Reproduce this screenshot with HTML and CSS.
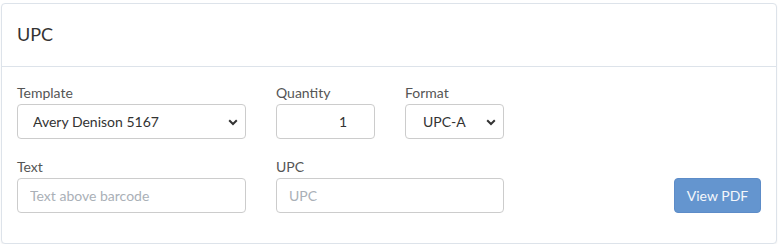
FILE: index.html
```html
<!DOCTYPE html>
<html lang="en">
<head>
<meta charset="utf-8">
<title>UPC</title>
<link rel="stylesheet" href="styles.css">
</head>
<body>
<div class="card">
  <div class="card-header">UPC</div>
  <div class="card-body">
    <div class="row">
      <div class="field w-wide">
        <label class="label" for="tpl">Template</label>
        <div class="select-wrap">
          <select id="tpl" class="control select">
            <option>Avery Denison 5167</option>
          </select>
          <svg class="chev" width="10" height="7" viewBox="0 0 10 7"><path d="M1.2 1.3 L5 5 L8.8 1.3" fill="none" stroke="#333" stroke-width="2"/></svg>
        </div>
      </div>
      <div class="field w-narrow">
        <label class="label" for="qty">Quantity</label>
        <input id="qty" class="control qty" type="text" value="1">
      </div>
      <div class="field w-narrow">
        <label class="label" for="fmt">Format</label>
        <div class="select-wrap">
          <select id="fmt" class="control select fmt">
            <option>UPC-A</option>
          </select>
          <svg class="chev" width="10" height="7" viewBox="0 0 10 7"><path d="M1.2 1.3 L5 5 L8.8 1.3" fill="none" stroke="#333" stroke-width="2"/></svg>
        </div>
      </div>
    </div>
    <div class="row row2">
      <div class="field w-wide">
        <label class="label" for="txt">Text</label>
        <input id="txt" class="control" type="text" placeholder="Text above barcode">
      </div>
      <div class="field w-upc">
        <label class="label" for="upc">UPC</label>
        <input id="upc" class="control" type="text" placeholder="UPC">
      </div>
      <div class="actions">
        <button class="btn" type="button">View PDF</button>
      </div>
    </div>
  </div>
</div>
</body>
</html>
```

FILE: styles.css
```css
* { box-sizing: border-box; }
html, body { margin: 0; padding: 0; background: #fff; }
body {
  font-family: Lato, "Open Sans", "Liberation Sans", sans-serif;
  color: #333;
  padding: 3px 5px 0 1px;
}
.card {
  border: 1px solid #dde3ea;
  border-radius: 4px;
  box-shadow: 0 1px 2px rgba(0, 0, 0, 0.06);
  background: #fff;
}
.card-header {
  padding: 19px 15px 21px;
  line-height: 22px;
  font-size: 18px;
  color: #333;
  border-bottom: 1px solid #dde3ea;
}
.card-body {
  padding: 17px 15px 30px 15px;
}
.row {
  display: flex;
  align-items: flex-end;
  column-gap: 30px;
}
.row2 { margin-top: 19px; }
.field { display: flex; flex-direction: column; }
.w-wide { width: 229px; }
.w-narrow { width: 99px; }
.w-upc { width: 228px; }
.label {
  font-size: 14px;
  line-height: 17px;
  margin-bottom: 3px;
  color: #555;
}
.control {
  height: 35px;
  width: 100%;
  border: 1px solid #ccc;
  border-radius: 4px;
  background: #fff;
  font-family: inherit;
  font-size: 14px;
  color: #333;
  padding: 0 12px;
  outline: none;
}
.control::placeholder { color: #aab0b7; }
.qty { text-align: right; padding-right: 27px; }
.select-wrap { position: relative; }
.select {
  appearance: none;
  -webkit-appearance: none;
  padding-left: 15px;
  padding-right: 24px;
}
.fmt { padding-left: 17px; }
.chev {
  position: absolute;
  right: 8px;
  top: 15px;
  pointer-events: none;
}
.actions {
  margin-left: auto;
}
.btn {
  height: 35px;
  width: 87px;
  border: 1px solid #5d8cc8;
  border-radius: 4px;
  background: #6495cf;
  color: #f4f7fb;
  font-family: inherit;
  font-size: 14px;
  padding: 0;
}
```
